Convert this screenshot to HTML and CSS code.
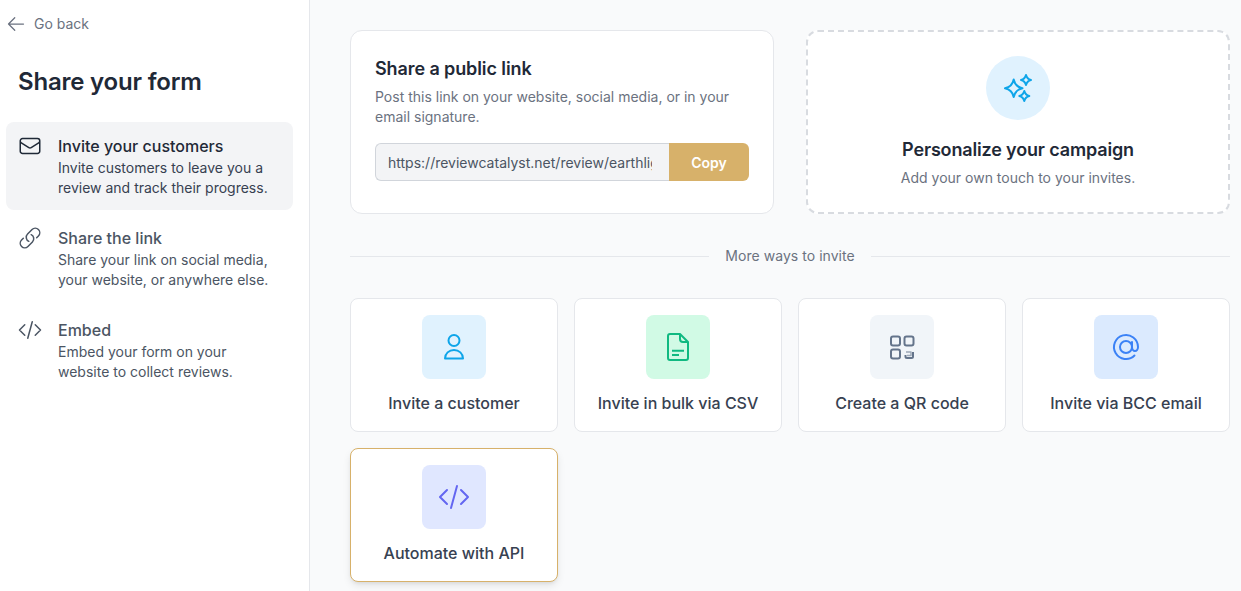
FILE: index.html
```html
<!DOCTYPE html>
<html lang="en">
<head>
<meta charset="utf-8">
<title>Share your form</title>
<link rel="stylesheet" href="styles.css">
</head>
<body>
<div class="layout">
  <aside class="sidebar">
    <a class="back">
      <svg class="back-icon" viewBox="0 0 24 24" fill="none" stroke="currentColor" stroke-width="1.5" stroke-linecap="round" stroke-linejoin="round"><path d="M10.5 19.5 3 12m0 0 7.5-7.5M3 12h18"/></svg>
      <span class="back-label">Go back</span>
    </a>
    <h1 class="page-title">Share your form</h1>
    <nav class="nav">
      <div class="nav-item active">
        <svg class="nav-icon" viewBox="0 0 24 24" fill="none" stroke="currentColor" stroke-width="1.5" stroke-linecap="round" stroke-linejoin="round"><path d="M21.75 6.75v10.5a2.25 2.25 0 0 1-2.25 2.25h-15a2.25 2.25 0 0 1-2.25-2.25V6.75m19.5 0A2.25 2.25 0 0 0 19.5 4.5h-15a2.25 2.25 0 0 0-2.25 2.25m19.5 0v.243a2.25 2.25 0 0 1-1.07 1.916l-7.5 4.615a2.25 2.25 0 0 1-2.36 0L3.32 8.91a2.25 2.25 0 0 1-1.07-1.916V6.75"/></svg>
        <div><div class="nav-title">Invite your customers</div><div class="nav-desc">Invite customers to leave you a review and track their progress.</div></div>
      </div>
      <div class="nav-item">
        <svg class="nav-icon" viewBox="0 0 24 24" fill="none" stroke="currentColor" stroke-width="1.5" stroke-linecap="round" stroke-linejoin="round"><path d="M13.19 8.688a4.5 4.5 0 0 1 1.242 7.244l-4.5 4.5a4.5 4.5 0 0 1-6.364-6.364l1.757-1.757m13.35-.622 1.757-1.757a4.5 4.5 0 0 0-6.364-6.364l-4.5 4.5a4.5 4.5 0 0 0 1.242 7.244"/></svg>
        <div><div class="nav-title">Share the link</div><div class="nav-desc">Share your link on social media, your website, or anywhere else.</div></div>
      </div>
      <div class="nav-item">
        <svg class="nav-icon" viewBox="0 0 24 24" fill="none" stroke="currentColor" stroke-width="1.5" stroke-linecap="round" stroke-linejoin="round"><path d="M17.25 6.75 22.5 12l-5.25 5.25m-10.5 0L1.5 12l5.25-5.25m7.5-3-4.5 16.5"/></svg>
        <div><div class="nav-title">Embed</div><div class="nav-desc">Embed your form on your website to collect reviews.</div></div>
      </div>
    </nav>
  </aside>
  <main class="main">
    <section class="top-row">
      <div class="card share">
        <h2 class="share-title">Share a public link</h2>
        <p class="share-desc">Post this link on your website, social media, or in your email signature.</p>
        <div class="link-row">
          <input class="link-field" type="text" readonly value="https://reviewcatalyst.net/review/earthlight">
          <div class="copy">Copy</div>
        </div>
      </div>
      <div class="card personalize">
        <div class="circle">
          <svg class="sparkle" viewBox="0 0 32 32" fill="none" stroke="currentColor" stroke-width="2" stroke-linejoin="round"><path d="M11.7 7.5Q13.2 14.8 20.5 16.3 13.2 17.8 11.7 25 10.2 17.8 3 16.3 10.2 14.8 11.7 7.5Z"/><path d="M24 3Q25 7 29 8 25 9 24 13 23 9 19 8 23 7 24 3Z"/><path d="M22.3 19Q23.3 23 27.3 24 23.3 25 22.3 29 21.3 25 17.3 24 21.3 23 22.3 19Z"/></svg>
        </div>
        <h2 class="personalize-title">Personalize your campaign</h2>
        <p class="personalize-desc">Add your own touch to your invites.</p>
      </div>
    </section>
    <div class="divider"><span>More ways to invite</span></div>
    <section class="tiles">
      <div class="tile">
        <div class="tile-icon sky"><svg viewBox="0 0 32 32" fill="none" stroke="currentColor" stroke-width="2" stroke-linejoin="round"><circle cx="16" cy="9.5" r="5.5"/><path d="M7 27.5h18c0-5-4-8.5-9-8.5s-9 3.5-9 8.5Z"/></svg></div>
        <div class="tile-label">Invite a customer</div>
      </div>
      <div class="tile">
        <div class="tile-icon green"><svg viewBox="0 0 32 32" fill="none" stroke="currentColor" stroke-width="2" stroke-linejoin="round"><path d="M18 3H8a2 2 0 0 0-2 2v22a2 2 0 0 0 2 2h16a2 2 0 0 0 2-2V11l-8-8Z"/><path d="M18 3v5a3 3 0 0 0 3 3h5M10 19.7h12M10 24h7"/></svg></div>
        <div class="tile-label">Invite in bulk via CSV</div>
      </div>
      <div class="tile">
        <div class="tile-icon slate"><svg viewBox="0 0 32 32" fill="none" stroke="currentColor" stroke-width="2" stroke-linejoin="round"><rect x="5" y="5.5" width="9" height="9" rx="2"/><rect x="18.5" y="5.5" width="9" height="9" rx="2"/><rect x="5" y="18.5" width="9" height="9" rx="2"/><path d="M27 21v4.5a1.5 1.5 0 0 1-1.5 1.5H21a1.5 1.5 0 0 1-1.5-1.5V24"/><path class="qr-soft" d="M20 21h5v3.5h-4"/></svg></div>
        <div class="tile-label">Create a QR code</div>
      </div>
      <div class="tile">
        <div class="tile-icon blue"><svg viewBox="0 0 24 24" fill="none" stroke="currentColor" stroke-width="1.5" stroke-linecap="round" stroke-linejoin="round"><path d="M16.5 12a4.5 4.5 0 1 1-9 0 4.5 4.5 0 0 1 9 0Zm0 0c0 1.657 1.007 3 2.25 3S21 13.657 21 12a9 9 0 1 0-2.636 6.364M16.5 12V8.25"/></svg></div>
        <div class="tile-label">Invite via BCC email</div>
      </div>
      <div class="tile featured">
        <div class="tile-icon indigo"><svg viewBox="0 0 24 24" fill="none" stroke="currentColor" stroke-width="1.5" stroke-linecap="round" stroke-linejoin="round"><path d="M17.25 6.75 22.5 12l-5.25 5.25m-10.5 0L1.5 12l5.25-5.25m7.5-3-4.5 16.5"/></svg></div>
        <div class="tile-label">Automate with API</div>
      </div>
    </section>
  </main>
</div>
</body>
</html>
```
FILE: styles.css
```css
* { box-sizing: border-box; }
html, body { margin: 0; height: 100%; overflow: hidden; }
body { font-family: Inter, "Liberation Sans", sans-serif; background: #f9fafb; color: #1f2937; }
h1, h2, p { margin: 0; }

.layout { display: flex; height: 591px; }

.sidebar { width: 310px; flex: none; background: #fff; border-right: 1px solid #e5e7eb; padding: 12px 16px 0 6px; }
.back { display: flex; align-items: center; gap: 8px; height: 24px; color: #6b7280; font-size: 14px; }
.back-icon { width: 20px; height: 20px; }
.back-label { margin-top: -2px; }
.page-title { margin: 30px 0 0 12px; font-size: 24px; line-height: 32px; font-weight: 600; letter-spacing: -.2px; color: #1f2937; }
.nav { margin-top: 24px; display: flex; flex-direction: column; gap: 4px; }
.nav-item { display: flex; gap: 16px; padding: 12px; border-radius: 8px; color: #4b5563; }
.nav-item.active { background: #f3f4f6; color: #1f2937; }
.nav-item.active .nav-desc { color: #374151; }
.nav-icon { width: 24px; height: 24px; flex: none; }
.nav-title { font-size: 16px; line-height: 24px; font-weight: 500; }
.nav-desc { font-size: 14px; line-height: 20px; }

.main { flex: 1; padding: 30px 11px 0 40px; min-width: 0; }
.top-row { display: grid; grid-template-columns: 424px 424px; gap: 32px; }
.card { background: #fff; border: 1px solid #e5e7eb; border-radius: 12px; height: 184px; }
.share { padding: 24px; }
.share-title { font-size: 18px; line-height: 28px; font-weight: 600; letter-spacing: -.1px; color: #1f2937; }
.share-desc { margin-top: 4px; font-size: 14px; line-height: 20px; color: #6b7280; }
.link-row { display: flex; height: 38px; margin-top: 16px; }
.link-field { flex: 1; min-width: 0; margin: 0; background: #f3f4f6; border: 1px solid #d1d5db; border-right: 0; border-radius: 6px 0 0 6px; padding: 0 17px 0 12px; font: 14px Inter, "Liberation Sans", sans-serif; color: #4b5563; outline: 0; }
.copy { width: 80px; flex: none; background: #d7b16a; color: #fff; border-radius: 0 6px 6px 0; display: flex; align-items: center; justify-content: center; font-size: 14px; font-weight: 600; }

.personalize { border: 2px dashed #d8dbe0; display: flex; flex-direction: column; align-items: center; padding-top: 24px; }
.circle { width: 64px; height: 64px; border-radius: 50%; background: #e0f2fe; color: #0ea5e9; display: flex; align-items: center; justify-content: center; }
.sparkle { width: 32px; height: 32px; }
.personalize-title { margin-top: 16px; font-size: 18px; line-height: 28px; font-weight: 600; letter-spacing: -.16px; color: #1f2937; }
.personalize-desc { margin-top: 4px; font-size: 14px; line-height: 20px; color: #6b7280; }

.divider { display: flex; align-items: center; gap: 16px; margin-top: 32px; height: 20px; font-size: 14px; line-height: 20px; letter-spacing: .05px; color: #6b7280; }
.divider::before, .divider::after { content: ""; flex: 1; height: 1px; background: #e5e7eb; }

.tiles { display: grid; grid-template-columns: repeat(4, 208px); gap: 16px; margin-top: 32px; }
.tile { height: 134px; background: #fff; border: 1px solid #e5e7eb; border-radius: 8px; display: flex; flex-direction: column; align-items: center; padding-top: 16px; }
.tile.featured { border-color: #d7b16a; box-shadow: 0 4px 8px -1px rgba(0,0,0,.1), 0 2px 4px -2px rgba(0,0,0,.1); }
.tile-icon { width: 64px; height: 64px; border-radius: 8px; display: flex; align-items: center; justify-content: center; }
.tile-icon svg { width: 32px; height: 32px; }
.qr-soft { opacity: .6; stroke-width: 1.5; }
.sky { background: #e0f2fe; color: #0ea5e9; }
.green { background: #d1fae5; color: #10b981; }
.slate { background: #f1f5f9; color: #64748b; }
.blue { background: #dbeafe; color: #3b82f6; }
.indigo { background: #e0e7ff; color: #6366f1; }
.tile-label { margin-top: 12px; font-size: 16px; line-height: 24px; font-weight: 500; color: #374151; }
```
